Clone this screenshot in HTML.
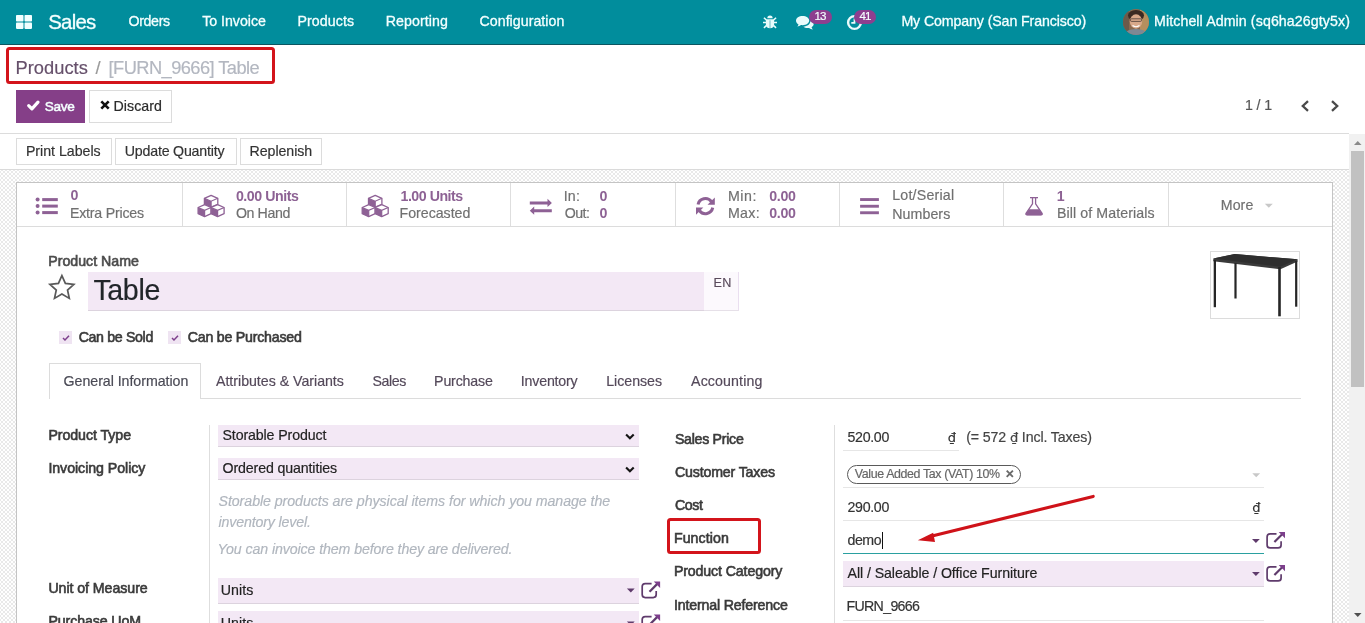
<!DOCTYPE html>
<html><head><meta charset="utf-8"><title>Products - Table</title>
<style>
*{box-sizing:border-box;margin:0;padding:0}
html,body{width:1365px;height:623px;overflow:hidden;background:#fff;font-family:"Liberation Sans",sans-serif;}
.a{position:absolute}
.dj{font-family:"DejaVu Sans",sans-serif}
.t{position:absolute;white-space:nowrap;display:block}
svg{position:absolute;overflow:visible}
.nav{left:0;top:0;width:1365px;height:45px;background:#018d9c;border-bottom:1px solid #0b5560}
.badge{background:#8d3f8f;border-radius:8px;height:14.5px}
.btn{border:1px solid #dcdcdc;background:#fff;border-radius:0}
.lilac{background:#f3e8f5;border-bottom:1px solid #dcd3de}
.uline{height:1px;background:#e6e6e6}
.vline{width:1px;background:#dedede}
.red{border:3px solid #d3141b;border-radius:3.5px}
</style></head><body>
<!-- navbar -->
<div class="a nav"></div>
<svg style="left:16px;top:15.300px" width="16" height="14" viewBox="0 0 16 14"><g fill="#f2ffff"><rect x="0" y="0" width="7.500" height="6.600" rx=".8"/><rect x="8.500" y="0" width="7.500" height="6.600" rx=".8"/><rect x="0" y="7.600" width="7.500" height="6.300" rx=".8"/><rect x="8.500" y="7.600" width="7.500" height="6.300" rx=".8"/></g></svg>
<!-- bug -->
<svg style="left:763px;top:14.500px" width="14" height="14" viewBox="0 0 14 14"><g fill="#e9fbfb" stroke="#e9fbfb"><path d="M4.300 3.300a2.700 2.700 0 0 1 5.400 0z" stroke="none"/><path d="M2.900 4.300h8.200v4.900a4.100 4.100 0 0 1-8.200 0z" stroke="none"/><path d="M0 7.500h3.200M10.800 7.500H14M0.900 2.700l2.400 2.200M13.100 2.700l-2.400 2.200M0.900 12.900l2.700-2.500M13.100 12.900l-2.700-2.500" stroke-width="1.500" fill="none"/></g><rect x="6.500" y="5.300" width="1" height="8" fill="#018d9c" opacity=".55"/></svg>
<!-- comments -->
<svg style="left:795.500px;top:15.500px" width="18" height="14" viewBox="0 0 18 14"><g fill="#e9fbfb"><path d="M6.600 0C2.950 0 0 2.100 0 4.700c0 1.500 1 2.850 2.550 3.700C2.300 9.300 1.700 10 1.200 10.500c1.500-.1 2.900-.7 3.800-1.400.5.070 1.050.1 1.600.1 3.650 0 6.600-2.100 6.600-4.700S10.250 0 6.600 0z"/><path d="M14.300 5.300c0 2.900-3 5.100-6.900 5.400 1 .900 2.500 1.400 4.100 1.400.55 0 1.100-.03 1.600-.1.900.7 2.300 1.300 3.800 1.400-.5-.5-1.100-1.200-1.350-2.100C16.900 10.500 17.700 9.400 17.700 8.100c0-1.300-1.400-2.400-3.400-2.800z"/></g></svg>
<div class="a badge" style="left:809px;top:9.700px;width:22.700px"></div>
<!-- clock -->
<svg style="left:847px;top:14.500px" width="15" height="15" viewBox="0 0 15 15"><circle cx="7.500" cy="7.500" r="6.400" fill="none" stroke="#e9fbfb" stroke-width="2.400"/><path d="M7.500 3.500v4.300H4.300" fill="none" stroke="#e9fbfb" stroke-width="1.800"/></svg>
<div class="a badge" style="left:854px;top:9.700px;width:21.700px"></div>
<!-- avatar -->
<svg style="left:1122.500px;top:9px" width="26" height="26" viewBox="0 0 26 26"><defs><clipPath id="av"><circle cx="13" cy="13" r="13"/></clipPath></defs><g clip-path="url(#av)"><rect width="26" height="26" fill="#8a6a4f"/><rect x="17" y="0" width="9" height="26" fill="#b58f5e"/><rect x="0" y="0" width="6" height="26" fill="#6b5a4a"/><ellipse cx="13" cy="6.500" rx="8" ry="5.500" fill="#3b2a22"/><ellipse cx="13" cy="12.500" rx="6.200" ry="7.200" fill="#d9a98a"/><rect x="7.500" y="9.800" width="11" height="2.600" rx="1" fill="none" stroke="#4a3a35" stroke-width=".8"/><path d="M9.500 16.500q3.500 2.500 7 0" stroke="#fff" stroke-width="1.200" fill="none"/><path d="M1 26q2-6 12-6t12 6z" fill="#7d8894"/></g></svg>

<!-- control panel -->
<div class="a red" style="left:6.200px;top:46.800px;width:269px;height:37px"></div>
<div class="a" style="left:16px;top:90px;width:69px;height:33px;background:#853f88"></div>
<svg style="left:27.400px;top:100px" width="12.500" height="10.500" viewBox="0 0 12.500 10.500"><path d="M1.700 5.700l3.200 3.200 6.100-6.700" fill="none" stroke="#fff" stroke-width="3.200" stroke-linecap="round" stroke-linejoin="round"/></svg>
<div class="a btn" style="left:89px;top:90px;width:83px;height:33px"></div>
<svg style="left:99.600px;top:100.300px" width="10" height="10" viewBox="0 0 10 10"><path d="M1.300 1.300l7.400 7.400M8.700 1.300l-7.400 7.400" stroke="#111" stroke-width="2.600" fill="none"/></svg>
<svg style="left:1299.700px;top:99.500px" width="10" height="12" viewBox="0 0 10 12"><path d="M8 1.200L2.800 6 8 10.800" fill="none" stroke="#4a4a4a" stroke-width="2.300"/></svg>
<svg style="left:1329.500px;top:99.500px" width="10" height="12" viewBox="0 0 10 12"><path d="M2 1.200L7.200 6 2 10.800" fill="none" stroke="#4a4a4a" stroke-width="2.300"/></svg>
<div class="a" style="left:0;top:133px;width:1349px;height:1px;background:#dcdcdc"></div>
<div class="a btn" style="left:16px;top:138px;width:96px;height:27px"></div>
<div class="a btn" style="left:115px;top:138px;width:122px;height:27px"></div>
<div class="a btn" style="left:240px;top:138px;width:82px;height:27px"></div>

<!-- content bg -->
<div class="a" style="left:0;top:169px;width:1349px;height:454px;background:repeating-conic-gradient(#e9e9e9 0% 25%,#fff 0% 50%) 3px 3px/4px 4px;border-top:1px solid #dadada"></div>
<div class="a" style="left:16px;top:182px;width:1317px;height:460px;background:#fff;border:1px solid #c4c4c4"></div>
<div class="a" style="left:17px;top:226px;width:1315px;height:1px;background:#dcdcdc"></div>
<div class="a vline" style="left:182px;top:183px;height:43px"></div>
<div class="a vline" style="left:346px;top:183px;height:43px"></div>
<div class="a vline" style="left:510px;top:183px;height:43px"></div>
<div class="a vline" style="left:675px;top:183px;height:43px"></div>
<div class="a vline" style="left:839px;top:183px;height:43px"></div>
<div class="a vline" style="left:1003px;top:183px;height:43px"></div>
<div class="a vline" style="left:1168px;top:183px;height:43px"></div>

<!-- scrollbar -->
<div class="a" style="left:1349px;top:134px;width:16px;height:489px;background:#f1f1f1"></div>
<div class="a" style="left:1351px;top:151px;width:13px;height:236px;background:#c1c1c1"></div>
<svg style="left:1354px;top:141px" width="8" height="4" viewBox="0 0 8 4"><path d="M0 4L3.750 0 7.500 4z" fill="#8a8a8a"/></svg>
<svg style="left:1354px;top:613px" width="8" height="4" viewBox="0 0 8 4"><path d="M0 0L3.750 4 7.500 0z" fill="#505050"/></svg>

<!-- form header -->
<div class="a lilac" style="left:88px;top:272px;width:616px;height:39px"></div>
<div class="a" style="left:704px;top:272px;width:35px;height:39px;background:#fcf9fd;border-right:1.500px solid #eadff0;border-bottom:1px solid #e6e0e8"></div>
<div class="a" style="left:1210px;top:251px;width:90px;height:68px;border:1px solid #dcdcdc;background:#fff"></div>
<svg style="left:1210px;top:251px" width="90" height="68" viewBox="1210 251 90 68"><path d="M1213.300 258.600L1234.600 254.100 1297.600 259.200 1297.600 261.400 1280.400 269.200 1213.300 261.200z" fill="#3a3a3a"/><path d="M1213.300 258.600L1234.600 254.100 1297.600 259.200 1280.400 266.700z" fill="#2e2e2e"/><g fill="#262626"><rect x="1213.700" y="260" width="2.300" height="47.200"/><rect x="1234.400" y="263" width="2.200" height="35.500"/><rect x="1278.200" y="267" width="2.600" height="49.300"/><rect x="1295.100" y="261" width="2.200" height="45.700"/></g></svg>
<div class="a" style="left:59px;top:331px;width:13px;height:13px;background:#efe4f2"></div>
<div class="a" style="left:168px;top:331px;width:13px;height:13px;background:#efe4f2"></div>
<svg style="left:61.500px;top:334.500px" width="8" height="6" viewBox="0 0 8 6"><path d="M1 3l2 2 4-4.200" fill="none" stroke="#7d3f8c" stroke-width="1.500"/></svg>
<svg style="left:170.500px;top:334.500px" width="8" height="6" viewBox="0 0 8 6"><path d="M1 3l2 2 4-4.200" fill="none" stroke="#7d3f8c" stroke-width="1.500"/></svg>
<!-- tabs -->
<div class="a" style="left:49px;top:398px;width:1252px;height:1px;background:#dcdcdc"></div>
<div class="a" style="left:49px;top:363px;width:152px;height:36px;background:#fff;border:1px solid #dcdcdc;border-bottom:none"></div>
<!-- groups -->
<div class="a vline" style="left:209px;top:425px;height:200px"></div>
<div class="a vline" style="left:834px;top:425px;height:200px"></div>
<div class="a lilac" style="left:218px;top:425px;width:421px;height:22px"></div>
<div class="a lilac" style="left:218px;top:458px;width:421px;height:22px"></div>
<div class="a lilac" style="left:218px;top:578px;width:421px;height:26px"></div>
<div class="a lilac" style="left:218px;top:611px;width:421px;height:26px"></div>
<div class="a uline" style="left:843px;top:450px;width:116px"></div>
<div class="a" style="left:846.800px;top:465.300px;width:174.600px;height:18.500px;border:1px solid #5a5a5a;border-radius:9.500px"></div>
<div class="a uline" style="left:843px;top:487px;width:421px"></div>
<div class="a uline" style="left:843px;top:520px;width:421px"></div>
<div class="a" style="left:843px;top:553px;width:421px;height:1px;background:#2aa0a0"></div>
<div class="a lilac" style="left:843px;top:561px;width:421px;height:26px"></div>
<div class="a uline" style="left:843px;top:620px;width:421px"></div>
<div class="a" style="left:882.300px;top:532px;width:1px;height:17px;background:#111"></div>
<div class="a red" style="left:667px;top:518.100px;width:94px;height:36.300px"></div>
<!-- arrow -->
<svg style="left:0;top:0" width="1365" height="623" viewBox="0 0 1365 623"><path d="M1093.200 496.400L930 536.500" stroke="#cf1219" stroke-width="3.100" fill="none" stroke-linecap="round"/><path d="M917.800 540.200L933.200 532.800 935 542z" fill="#cf1219"/></svg>
<svg style="left:0;top:0" width="1365" height="623" viewBox="0 0 1365 623" ><circle cx="37.6" cy="199.6" r="2" fill="#8e6195"/><rect x="42.2" y="198.1" width="15.6" height="3" fill="#8e6195"/><circle cx="37.6" cy="206.1" r="2" fill="#8e6195"/><rect x="42.2" y="204.6" width="15.6" height="3" fill="#8e6195"/><circle cx="37.6" cy="212.6" r="2" fill="#8e6195"/><rect x="42.2" y="211.1" width="15.6" height="3" fill="#8e6195"/><path d="M211.10 195.40L217.80 198.30L217.80 204.30L211.10 207.20L204.40 204.30L204.40 198.30Z" fill="#fff" stroke="#8e6195" stroke-width="1.3" stroke-linejoin="round"/><path d="M204.40 198.30L211.10 201.20L211.10 207.20L204.40 204.30Z" fill="#8e6195"/><path d="M204.40 198.30L211.10 201.20L217.80 198.30M211.10 201.20L211.10 207.20" fill="none" stroke="#8e6195" stroke-width="1.2"/><path d="M204.60 204.60L211.10 207.50L211.10 213.70L204.60 216.60L198.10 213.70L198.10 207.50Z" fill="#fff" stroke="#8e6195" stroke-width="1.3" stroke-linejoin="round"/><path d="M198.10 207.50L204.60 210.40L204.60 216.60L198.10 213.70Z" fill="#8e6195"/><path d="M198.10 207.50L204.60 210.40L211.10 207.50M204.60 210.40L204.60 216.60" fill="none" stroke="#8e6195" stroke-width="1.2"/><path d="M217.60 204.60L224.10 207.50L224.10 213.70L217.60 216.60L211.10 213.70L211.10 207.50Z" fill="#fff" stroke="#8e6195" stroke-width="1.3" stroke-linejoin="round"/><path d="M211.10 207.50L217.60 210.40L217.60 216.60L211.10 213.70Z" fill="#8e6195"/><path d="M211.10 207.50L217.60 210.40L224.10 207.50M217.60 210.40L217.60 216.60" fill="none" stroke="#8e6195" stroke-width="1.2"/><path d="M375.20 195.40L381.90 198.30L381.90 204.30L375.20 207.20L368.50 204.30L368.50 198.30Z" fill="#fff" stroke="#8e6195" stroke-width="1.3" stroke-linejoin="round"/><path d="M368.50 198.30L375.20 201.20L375.20 207.20L368.50 204.30Z" fill="#8e6195"/><path d="M368.50 198.30L375.20 201.20L381.90 198.30M375.20 201.20L375.20 207.20" fill="none" stroke="#8e6195" stroke-width="1.2"/><path d="M368.70 204.60L375.20 207.50L375.20 213.70L368.70 216.60L362.20 213.70L362.20 207.50Z" fill="#fff" stroke="#8e6195" stroke-width="1.3" stroke-linejoin="round"/><path d="M362.20 207.50L368.70 210.40L368.70 216.60L362.20 213.70Z" fill="#8e6195"/><path d="M362.20 207.50L368.70 210.40L375.20 207.50M368.70 210.40L368.70 216.60" fill="none" stroke="#8e6195" stroke-width="1.2"/><path d="M381.70 204.60L388.20 207.50L388.20 213.70L381.70 216.60L375.20 213.70L375.20 207.50Z" fill="#fff" stroke="#8e6195" stroke-width="1.3" stroke-linejoin="round"/><path d="M375.20 207.50L381.70 210.40L381.70 216.60L375.20 213.70Z" fill="#8e6195"/><path d="M375.20 207.50L381.70 210.40L388.20 207.50M381.70 210.40L381.70 216.60" fill="none" stroke="#8e6195" stroke-width="1.2"/><path d="M529.8 201.4h17.7v-2.6l4.4 4.1-4.4 4.1v-2.6h-17.7z" fill="#8e6195"/><path d="M551.8 209.2h-17.6v-2.6l-4.4 4.1 4.400 4.100v-2.600h17.600z" fill="#8e6195"/><path d="M698.06 204.54A7.5 7.5 0 0 1 711.31 201.48" fill="none" stroke="#8e6195" stroke-width="3"/><path d="M714.8 197.400v7.300h-7.300z" fill="#8e6195"/><path d="M712.74 207.66A7.5 7.5 0 0 1 699.49 210.72" fill="none" stroke="#8e6195" stroke-width="3"/><path d="M696 214.800v-7.300h7.300z" fill="#8e6195"/><rect x="860.1" y="198.1" width="18.8" height="2.900" fill="#8e6195"/><rect x="860.1" y="204.8" width="18.8" height="2.900" fill="#8e6195"/><rect x="860.1" y="211.3" width="18.8" height="2.900" fill="#8e6195"/><path d="M1030 197h8v1.300h-8z" fill="#8e6195"/><path d="M1032.500 198v5.800l-6.300 9.400q-1 1.700 1 1.700h13.700q2 0 1-1.700l-6.300-9.400v-5.800" fill="none" stroke="#8e6195" stroke-width="1.300"/><path d="M1029 209.200h10.100l3 4.400q.8 1.600-1 1.600h-14.100q-1.800 0-1-1.600z" fill="#8e6195"/><path d="M1264.800 203.800h8l-4 4z" fill="#c8c8c8"/><path d="M61.90 275.60L65.37 283.43L73.88 284.31L67.51 290.02L69.31 298.39L61.90 294.10L54.49 298.39L56.29 290.02L49.92 284.31L58.43 283.43Z" fill="none" stroke="#595959" stroke-width="1.700" stroke-linejoin="miter"/><path d="M626.100 434.4l3.800 3.800 3.800-3.800" fill="none" stroke="#151515" stroke-width="2.100"/><path d="M626.100 467.4l3.800 3.800 3.800-3.800" fill="none" stroke="#151515" stroke-width="2.100"/><path d="M1252 538.9h7.800l-3.900 4z" fill="#5f3b6c"/><path d="M1276.5 533.9h-6.400a3 3 0 0 0 -3 3v8a3 3 0 0 0 3 3h8a3 3 0 0 0 3-3v-3.600" fill="none" stroke="#5f3b6c" stroke-width="1.700"/><path d="M1274.3999999999999 542.0l8.300-8.300" stroke="#5f3b6c" stroke-width="2.200" fill="none"/><path d="M1278.6999999999998 531.9h6.300v6.300z" fill="#7d3f8c"/><path d="M1252 571.9h7.800l-3.900 4z" fill="#5f3b6c"/><path d="M1276.5 566.9h-6.400a3 3 0 0 0 -3 3v8a3 3 0 0 0 3 3h8a3 3 0 0 0 3-3v-3.600" fill="none" stroke="#5f3b6c" stroke-width="1.700"/><path d="M1274.3999999999999 575.0l8.300-8.300" stroke="#5f3b6c" stroke-width="2.200" fill="none"/><path d="M1278.6999999999998 564.9h6.300v6.300z" fill="#7d3f8c"/><path d="M626.9 588.5h7.800l-3.900 4z" fill="#5f3b6c"/><path d="M651.6 583.6h-6.400a3 3 0 0 0 -3 3v8a3 3 0 0 0 3 3h8a3 3 0 0 0 3-3v-3.600" fill="none" stroke="#5f3b6c" stroke-width="1.700"/><path d="M649.5 591.7l8.300-8.300" stroke="#5f3b6c" stroke-width="2.200" fill="none"/><path d="M653.8000000000001 581.6h6.300v6.300z" fill="#7d3f8c"/><path d="M626.9 621.5h7.800l-3.900 4z" fill="#5f3b6c"/><path d="M651.6 616.6h-6.400a3 3 0 0 0 -3 3v8a3 3 0 0 0 3 3h8a3 3 0 0 0 3-3v-3.600" fill="none" stroke="#5f3b6c" stroke-width="1.700"/><path d="M649.5 624.7l8.300-8.300" stroke="#5f3b6c" stroke-width="2.200" fill="none"/><path d="M653.8000000000001 614.6h6.300v6.300z" fill="#7d3f8c"/><path d="M1252.3 473.3h7.800l-3.900 4z" fill="#c8c8c8"/><path d="M1006.700 470.600l6.200 6.200M1012.900 470.600l-6.200 6.200" stroke="#6a6a6a" stroke-width="1.900" fill="none"/></svg>
<div class="a" style="left:0;top:0;width:1365px;height:623px;will-change:transform">
<span class="t" style="left:48.3px;top:11px;font-size:20.4px;line-height:22px;color:#f4ffff;-webkit-text-stroke:0.3px #f4ffff;letter-spacing:-0.778px;">Sales</span>
<span class="t" style="left:128.5px;top:13px;font-size:14.2px;line-height:16px;color:#f4ffff;-webkit-text-stroke:0.3px #f4ffff;letter-spacing:-0.353px;">Orders</span>
<span class="t" style="left:202.2px;top:13px;font-size:14.2px;line-height:16px;color:#f4ffff;-webkit-text-stroke:0.3px #f4ffff;letter-spacing:-0.021px;">To Invoice</span>
<span class="t" style="left:297.4px;top:13px;font-size:14.2px;line-height:16px;color:#f4ffff;-webkit-text-stroke:0.3px #f4ffff;letter-spacing:0.101px;">Products</span>
<span class="t" style="left:385.8px;top:13px;font-size:14.2px;line-height:16px;color:#f4ffff;-webkit-text-stroke:0.3px #f4ffff;letter-spacing:0.072px;">Reporting</span>
<span class="t" style="left:479.5px;top:13px;font-size:14.2px;line-height:16px;color:#f4ffff;-webkit-text-stroke:0.3px #f4ffff;letter-spacing:0.033px;">Configuration</span>
<span class="t" style="left:901.4px;top:13px;font-size:14.2px;line-height:16px;color:#f4ffff;-webkit-text-stroke:0.3px #f4ffff;letter-spacing:-0.113px;">My Company (San Francisco)</span>
<span class="t" style="left:1154.0px;top:13px;font-size:14.2px;line-height:16px;color:#f4ffff;-webkit-text-stroke:0.3px #f4ffff;letter-spacing:0.098px;">Mitchell Admin (sq6ha26gty5x)</span>
<span class="t" style="left:814.5px;top:10px;font-size:11.6px;line-height:12px;color:#f4ffff;-webkit-text-stroke:0.18px #f4ffff;letter-spacing:-0.948px;">13</span>
<span class="t" style="left:859.5px;top:10px;font-size:11.6px;line-height:12px;color:#f4ffff;-webkit-text-stroke:0.18px #f4ffff;letter-spacing:-0.948px;">41</span>
<span class="t" style="left:15.4px;top:57px;font-size:18.3px;line-height:21px;color:#66506b;-webkit-text-stroke:0.18px #66506b;letter-spacing:0.043px;">Products</span>
<span class="t" style="left:95.4px;top:57px;font-size:18.3px;line-height:21px;color:#9a9a9a;-webkit-text-stroke:0.18px #9a9a9a;letter-spacing:0.000px;">/</span>
<span class="t" style="left:108.6px;top:57px;font-size:18.3px;line-height:21px;color:#b3b7c0;-webkit-text-stroke:0.18px #b3b7c0;letter-spacing:-0.574px;">[FURN_9666] Table</span>
<span class="t" style="left:44.8px;top:99px;font-size:13.6px;line-height:15px;color:#f4ffff;-webkit-text-stroke:0.5px #f4ffff;letter-spacing:-0.341px;">Save</span>
<span class="t" style="left:113.6px;top:98px;font-size:14.2px;line-height:16px;color:#2b2b2b;-webkit-text-stroke:0.2px #2b2b2b;letter-spacing:0.017px;">Discard</span>
<span class="t" style="left:1245.0px;top:97px;font-size:14.2px;line-height:16px;color:#555;-webkit-text-stroke:0.18px #555;letter-spacing:-0.104px;">1 / 1</span>
<span class="t" style="left:25.9px;top:143px;font-size:14.2px;line-height:16px;color:#333;-webkit-text-stroke:0.18px #333;letter-spacing:-0.012px;">Print Labels</span>
<span class="t" style="left:124.8px;top:143px;font-size:14.2px;line-height:16px;color:#333;-webkit-text-stroke:0.18px #333;letter-spacing:-0.202px;">Update Quantity</span>
<span class="t" style="left:249.6px;top:143px;font-size:14.2px;line-height:16px;color:#333;-webkit-text-stroke:0.18px #333;letter-spacing:-0.063px;">Replenish</span>
<span class="t" style="left:70.6px;top:187px;font-size:14.2px;line-height:16px;color:#8d6294;font-weight:700;letter-spacing:0.000px;">0</span>
<span class="t" style="left:70.0px;top:205px;font-size:14.2px;line-height:16px;color:#707070;-webkit-text-stroke:0.18px #707070;letter-spacing:-0.216px;">Extra Prices</span>
<span class="t" style="left:235.9px;top:188px;font-size:14.2px;line-height:16px;color:#8d6294;font-weight:700;letter-spacing:-0.459px;">0.00 Units</span>
<span class="t" style="left:235.9px;top:205px;font-size:14.2px;line-height:16px;color:#707070;-webkit-text-stroke:0.18px #707070;letter-spacing:-0.399px;">On Hand</span>
<span class="t" style="left:400.5px;top:188px;font-size:14.2px;line-height:16px;color:#8d6294;font-weight:700;letter-spacing:-0.481px;">1.00 Units</span>
<span class="t" style="left:399.5px;top:205px;font-size:14.2px;line-height:16px;color:#707070;-webkit-text-stroke:0.18px #707070;letter-spacing:-0.009px;">Forecasted</span>
<span class="t" style="left:563.7px;top:188px;font-size:14.2px;line-height:16px;color:#707070;-webkit-text-stroke:0.18px #707070;letter-spacing:0.234px;">In:</span>
<span class="t" style="left:599.6px;top:188px;font-size:14.2px;line-height:16px;color:#8d6294;font-weight:700;letter-spacing:0.000px;">0</span>
<span class="t" style="left:564.7px;top:205px;font-size:14.2px;line-height:16px;color:#707070;-webkit-text-stroke:0.18px #707070;letter-spacing:-0.523px;">Out:</span>
<span class="t" style="left:599.6px;top:205px;font-size:14.2px;line-height:16px;color:#8d6294;font-weight:700;letter-spacing:0.000px;">0</span>
<span class="t" style="left:728.0px;top:188px;font-size:14.2px;line-height:16px;color:#707070;-webkit-text-stroke:0.18px #707070;letter-spacing:0.546px;">Min:</span>
<span class="t" style="left:769.2px;top:188px;font-size:14.2px;line-height:16px;color:#8d6294;font-weight:700;letter-spacing:-0.308px;">0.00</span>
<span class="t" style="left:728.0px;top:205px;font-size:14.2px;line-height:16px;color:#707070;-webkit-text-stroke:0.18px #707070;letter-spacing:0.299px;">Max:</span>
<span class="t" style="left:769.2px;top:205px;font-size:14.2px;line-height:16px;color:#8d6294;font-weight:700;letter-spacing:-0.308px;">0.00</span>
<span class="t" style="left:892.2px;top:187px;font-size:14.2px;line-height:16px;color:#707070;-webkit-text-stroke:0.18px #707070;letter-spacing:0.224px;">Lot/Serial</span>
<span class="t" style="left:892.2px;top:206px;font-size:14.2px;line-height:16px;color:#707070;-webkit-text-stroke:0.18px #707070;letter-spacing:0.090px;">Numbers</span>
<span class="t" style="left:1056.8px;top:188px;font-size:14.2px;line-height:16px;color:#8d6294;font-weight:700;letter-spacing:0.000px;">1</span>
<span class="t" style="left:1057.0px;top:205px;font-size:14.2px;line-height:16px;color:#707070;-webkit-text-stroke:0.18px #707070;letter-spacing:0.088px;">Bill of Materials</span>
<span class="t" style="left:1220.8px;top:197px;font-size:14.2px;line-height:16px;color:#707070;-webkit-text-stroke:0.18px #707070;letter-spacing:0.056px;">More</span>
<span class="t" style="left:48.3px;top:253px;font-size:14.2px;line-height:16px;color:#4c4c4c;-webkit-text-stroke:0.6px #4c4c4c;letter-spacing:-0.008px;">Product Name</span>
<span class="t" style="left:93.4px;top:274px;font-size:28.6px;line-height:32px;color:#212529;-webkit-text-stroke:0.18px #212529;letter-spacing:-0.363px;">Table</span>
<span class="t" style="left:713.6px;top:276px;font-size:12.6px;line-height:14px;color:#5a4b5c;-webkit-text-stroke:0.18px #5a4b5c;letter-spacing:0.300px;">EN</span>
<span class="t" style="left:78.7px;top:329px;font-size:14.2px;line-height:16px;color:#3a3a3a;-webkit-text-stroke:0.6px #3a3a3a;letter-spacing:-0.350px;">Can be Sold</span>
<span class="t" style="left:187.8px;top:329px;font-size:14.2px;line-height:16px;color:#3a3a3a;-webkit-text-stroke:0.6px #3a3a3a;letter-spacing:-0.235px;">Can be Purchased</span>
<span class="t" style="left:63.6px;top:373px;font-size:14.2px;line-height:16px;color:#4a4a55;-webkit-text-stroke:0.18px #4a4a55;letter-spacing:-0.039px;">General Information</span>
<span class="t" style="left:216.0px;top:373px;font-size:14.2px;line-height:16px;color:#54495a;-webkit-text-stroke:0.18px #54495a;letter-spacing:-0.019px;">Attributes &amp; Variants</span>
<span class="t" style="left:372.4px;top:373px;font-size:14.2px;line-height:16px;color:#54495a;-webkit-text-stroke:0.18px #54495a;letter-spacing:-0.374px;">Sales</span>
<span class="t" style="left:434.1px;top:373px;font-size:14.2px;line-height:16px;color:#54495a;-webkit-text-stroke:0.18px #54495a;letter-spacing:-0.164px;">Purchase</span>
<span class="t" style="left:520.8px;top:373px;font-size:14.2px;line-height:16px;color:#54495a;-webkit-text-stroke:0.18px #54495a;letter-spacing:-0.183px;">Inventory</span>
<span class="t" style="left:606.2px;top:373px;font-size:14.2px;line-height:16px;color:#54495a;-webkit-text-stroke:0.18px #54495a;letter-spacing:-0.014px;">Licenses</span>
<span class="t" style="left:691.1px;top:373px;font-size:14.2px;line-height:16px;color:#54495a;-webkit-text-stroke:0.18px #54495a;letter-spacing:0.110px;">Accounting</span>
<span class="t" style="left:48.4px;top:427px;font-size:14.2px;line-height:16px;color:#3a3a3a;-webkit-text-stroke:0.6px #3a3a3a;letter-spacing:-0.064px;">Product Type</span>
<span class="t" style="left:48.4px;top:460px;font-size:14.2px;line-height:16px;color:#3a3a3a;-webkit-text-stroke:0.6px #3a3a3a;letter-spacing:-0.053px;">Invoicing Policy</span>
<span class="t" style="left:222.5px;top:427px;font-size:14.2px;line-height:16px;color:#222;-webkit-text-stroke:0.18px #222;letter-spacing:-0.122px;">Storable Product</span>
<span class="t" style="left:222.5px;top:460px;font-size:14.2px;line-height:16px;color:#222;-webkit-text-stroke:0.18px #222;letter-spacing:-0.125px;">Ordered quantities</span>
<span class="t" style="left:218.5px;top:493px;font-size:14.2px;line-height:16px;color:#b0b6be;font-style:italic;-webkit-text-stroke:0.18px #b0b6be;letter-spacing:-0.057px;">Storable products are physical items for which you manage the</span>
<span class="t" style="left:218.5px;top:514px;font-size:14.2px;line-height:16px;color:#b0b6be;font-style:italic;-webkit-text-stroke:0.18px #b0b6be;letter-spacing:-0.146px;">inventory level.</span>
<span class="t" style="left:217.5px;top:541px;font-size:14.2px;line-height:16px;color:#b0b6be;font-style:italic;-webkit-text-stroke:0.18px #b0b6be;letter-spacing:-0.103px;">You can invoice them before they are delivered.</span>
<span class="t" style="left:48.4px;top:580px;font-size:14.2px;line-height:16px;color:#3a3a3a;-webkit-text-stroke:0.6px #3a3a3a;letter-spacing:-0.061px;">Unit of Measure</span>
<span class="t" style="left:220.8px;top:582px;font-size:14.2px;line-height:16px;color:#222;-webkit-text-stroke:0.18px #222;letter-spacing:0.043px;">Units</span>
<span class="t" style="left:48.4px;top:613px;font-size:14.2px;line-height:16px;color:#3a3a3a;-webkit-text-stroke:0.6px #3a3a3a;letter-spacing:-0.101px;">Purchase UoM</span>
<span class="t" style="left:220.8px;top:615px;font-size:14.2px;line-height:16px;color:#222;-webkit-text-stroke:0.18px #222;letter-spacing:0.043px;">Units</span>
<span class="t" style="left:674.9px;top:431px;font-size:14.2px;line-height:16px;color:#3a3a3a;-webkit-text-stroke:0.6px #3a3a3a;letter-spacing:-0.286px;">Sales Price</span>
<span class="t" style="left:674.9px;top:464px;font-size:14.2px;line-height:16px;color:#3a3a3a;-webkit-text-stroke:0.6px #3a3a3a;letter-spacing:-0.154px;">Customer Taxes</span>
<span class="t" style="left:674.9px;top:497px;font-size:14.2px;line-height:16px;color:#3a3a3a;-webkit-text-stroke:0.6px #3a3a3a;letter-spacing:-0.343px;">Cost</span>
<span class="t" style="left:673.9px;top:530px;font-size:14.2px;line-height:16px;color:#3a3a3a;-webkit-text-stroke:0.6px #3a3a3a;letter-spacing:0.082px;">Function</span>
<span class="t" style="left:673.9px;top:563px;font-size:14.2px;line-height:16px;color:#3a3a3a;-webkit-text-stroke:0.6px #3a3a3a;letter-spacing:-0.127px;">Product Category</span>
<span class="t" style="left:673.9px;top:597px;font-size:14.2px;line-height:16px;color:#3a3a3a;-webkit-text-stroke:0.6px #3a3a3a;letter-spacing:-0.161px;">Internal Reference</span>
<span class="t" style="left:847.5px;top:429px;font-size:14.2px;line-height:16px;color:#333;-webkit-text-stroke:0.18px #333;letter-spacing:-0.321px;">520.00</span>
<span class="t" style="left:947.7px;top:430px;font-size:13px;line-height:15px;color:#333;-webkit-text-stroke:0.18px #333;"><span class="dj">₫</span></span>
<span class="t" style="left:966.2px;top:429px;font-size:14.2px;line-height:16px;color:#444;-webkit-text-stroke:0.18px #444;letter-spacing:-0.127px;">(= 572 <span class="dj" style="font-size:13px">₫</span> Incl. Taxes)</span>
<span class="t" style="left:854.8px;top:467px;font-size:12.4px;line-height:14px;color:#666;-webkit-text-stroke:0.18px #666;letter-spacing:-0.364px;">Value Added Tax (VAT) 10%</span>
<span class="t" style="left:847.5px;top:499px;font-size:14.2px;line-height:16px;color:#333;-webkit-text-stroke:0.18px #333;letter-spacing:-0.321px;">290.00</span>
<span class="t" style="left:1252.2px;top:500px;font-size:13px;line-height:15px;color:#333;-webkit-text-stroke:0.18px #333;"><span class="dj">₫</span></span>
<span class="t" style="left:847.5px;top:532px;font-size:14.2px;line-height:16px;color:#333;-webkit-text-stroke:0.18px #333;letter-spacing:-0.466px;">demo</span>
<span class="t" style="left:847.5px;top:565px;font-size:14.2px;line-height:16px;color:#222;-webkit-text-stroke:0.18px #222;letter-spacing:-0.074px;">All / Saleable / Office Furniture</span>
<span class="t" style="left:846.5px;top:598px;font-size:14.2px;line-height:16px;color:#333;-webkit-text-stroke:0.18px #333;letter-spacing:-0.683px;">FURN_9666</span>
</div>
</body></html>
